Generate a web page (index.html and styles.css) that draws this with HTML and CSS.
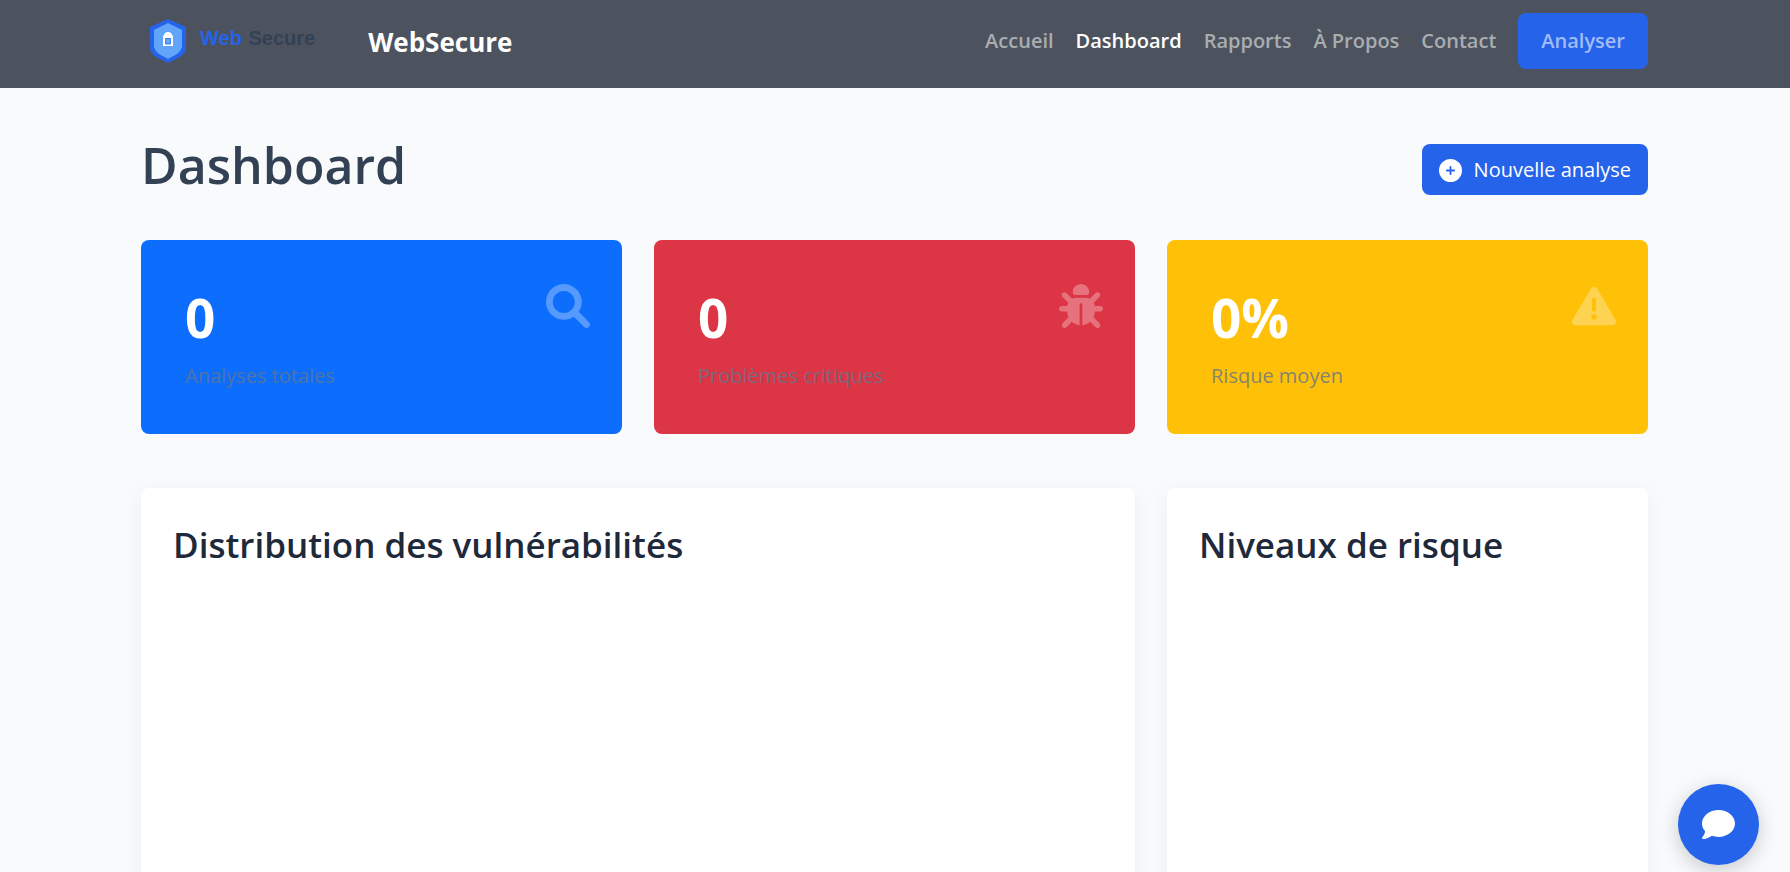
FILE: index.html
```html
<!DOCTYPE html>
<html lang="fr">
<head>
<meta charset="utf-8">
<meta name="viewport" content="width=device-width, initial-scale=1">
<title>Dashboard - WebSecure</title>
<link rel="stylesheet" href="styles.css">
</head>
<body>
<header class="navbar">
  <div class="container navbar-inner">
    <a class="brand" href="#">
      <span class="logo">
        <svg class="logo-shield" viewBox="0 0 36 44" aria-hidden="true">
          <path fill="#2563eb" d="M18 0 36 8V28Q36 34 30 38L18 44 6 38Q0 34 0 28V8Z"/>
          <path fill="#60a5fa" d="M18 4 32 11V28Q31 32 27 35L18 40 9 35Q5 32 4 28V11Z"/>
          <path fill="#fff" d="M14 16Q14.500 13 18 13T22 16L23 17V27H13V17Z"/>
          <path fill="#60a5fa" stroke="#3b82f6" d="M15.500 19.500H20.500V25H15.500Z"/>
        </svg>
        <span class="logo-text"><span class="logo-web">Web</span> <span>Secure</span></span>
      </span>
      <span class="brand-name">WebSecure</span>
    </a>
    <nav class="nav" aria-label="Navigation principale">
      <a class="nav-link" href="#">Accueil</a>
      <a class="nav-link active" href="#" aria-current="page">Dashboard</a>
      <a class="nav-link" href="#">Rapports</a>
      <a class="nav-link" href="#">À Propos</a>
      <a class="nav-link" href="#">Contact</a>
      <a class="nav-link nav-cta" href="#">Analyser</a>
    </nav>
  </div>
</header>

<main class="content">
  <div class="container">
    <div class="page-head">
      <h1 class="page-title">Dashboard</h1>
      <a class="btn-new" href="#">
        <svg class="btn-icon" viewBox="0 0 512 512" aria-hidden="true"><path fill-rule="evenodd" d="M256 512A256 256 0 1 0 256 0a256 256 0 1 0 0 512zM236 338V276H174a20 20 0 0 1 0-40H236V174a20 20 0 0 1 40 0V236H338a20 20 0 0 1 0 40H276V338a20 20 0 0 1-40 0z"/></svg>
        <span>Nouvelle analyse</span>
      </a>
    </div>

    <section class="grid stats" aria-label="Statistiques">
      <article class="stat stat-primary">
        <div>
          <h2 class="stat-value">0</h2>
          <p class="stat-label">Analyses totales</p>
        </div>
        <svg class="stat-icon" viewBox="0 0 512 512" aria-hidden="true"><path d="M500.300 443.700l-119.700-119.700c27.220-40.410 40.650-90.900 33.460-144.700C401.800 87.790 326.800 13.320 235.200 1.723C99.010-15.510-15.510 99.010 1.724 235.200c11.600 91.640 86.080 166.700 177.600 178.900c53.800 7.189 104.300-6.236 144.700-33.460l119.700 119.700c15.620 15.620 40.950 15.620 56.570 0C515.900 484.700 515.900 459.300 500.300 443.700zM79.100 208c0-70.580 57.420-128 128-128s128 57.420 128 128c0 70.580-57.420 128-128 128S79.100 278.600 79.100 208z"/></svg>
      </article>
      <article class="stat stat-danger">
        <div>
          <h2 class="stat-value">0</h2>
          <p class="stat-label">Problèmes critiques</p>
        </div>
        <svg class="stat-icon" viewBox="0 0 512 512" aria-hidden="true"><path d="M256 0c53 0 96 43 96 96v3.600c0 15.700-12.700 28.400-28.400 28.400H188.400c-15.700 0-28.400-12.700-28.400-28.400V96c0-53 43-96 96-96zM41.400 105.400c12.500-12.500 32.800-12.500 45.300 0l64 64c.7 .7 1.300 1.400 1.900 2.100c14.200-7.300 30.400-11.400 47.500-11.400H312c17.100 0 33.200 4.100 47.500 11.400c.6-.7 1.200-1.400 1.900-2.100l64-64c12.500-12.500 32.800-12.500 45.300 0s12.500 32.800 0 45.300l-64 64c-.7 .7-1.400 1.300-2.100 1.900c6.200 12 10.100 25.300 11.100 39.500H480c17.700 0 32 14.300 32 32s-14.300 32-32 32H416c0 24.600-5.500 47.800-15.400 68.600c2.200 1.300 4.200 2.900 6 4.800l64 64c12.500 12.500 12.500 32.800 0 45.300s-32.800 12.500-45.300 0l-63.100-63.100c-24.500 21.800-55.800 36.200-90.300 39.600V240c0-8.800-7.200-16-16-16s-16 7.200-16 16V479.200c-34.500-3.400-65.800-17.800-90.300-39.600L86.600 502.600c-12.500 12.500-32.800 12.500-45.300 0s-12.500-32.800 0-45.300l64-64c1.900-1.900 3.900-3.400 6-4.800C101.500 367.800 96 344.600 96 320H32c-17.700 0-32-14.300-32-32s14.300-32 32-32H96.300c1.100-14.100 5-27.500 11.100-39.500c-.7-.6-1.400-1.200-2.100-1.900l-64-64c-12.500-12.500-12.500-32.800 0-45.300z"/></svg>
      </article>
      <article class="stat stat-warning">
        <div>
          <h2 class="stat-value">0%</h2>
          <p class="stat-label">Risque moyen</p>
        </div>
        <svg class="stat-icon" viewBox="0 0 512 512" aria-hidden="true"><path d="M256 32c14.200 0 27.300 7.500 34.500 19.800l216 368c7.300 12.400 7.300 27.700 .2 40.100S486.300 480 472 480H40c-14.300 0-27.600-7.700-34.700-20.100s-7-27.800 .2-40.100l216-368C228.700 39.500 241.800 32 256 32zm0 128c-13.300 0-24 10.700-24 24V296c0 13.300 10.700 24 24 24s24-10.700 24-24V184c0-13.300-10.700-24-24-24zm32 224a32 32 0 1 0 -64 0 32 32 0 1 0 64 0z"/></svg>
      </article>
    </section>

    <section class="grid charts" aria-label="Graphiques">
      <article class="panel panel-wide"><h2 class="panel-title">Distribution des vulnérabilités</h2></article>
      <article class="panel"><h2 class="panel-title">Niveaux de risque</h2></article>
    </section>
  </div>
</main>

<button class="chat-button" type="button" aria-label="Ouvrir le chat">
  <svg class="chat-icon" viewBox="0 0 512 512" aria-hidden="true"><path d="M512 240c0 114.900-114.600 208-256 208c-37.100 0-72.300-6.400-104.100-17.900c-11.900 8.700-31.300 20.600-54.300 30.600C73.600 471.100 44.700 480 16 480c-6.500 0-12.300-3.900-14.800-9.900c-2.500-6-1.100-12.800 3.400-17.400l.3-.3c.3-.3 .7-.7 1.300-1.400c1.100-1.200 2.800-3.100 4.900-5.700c4.100-5 9.600-12.400 15.200-21.600c10-16.600 19.500-38.400 21.400-62.900C17.700 326.800 0 285.100 0 240C0 125.100 114.600 32 256 32s256 93.100 256 208z"/></svg>
</button>
</body>
</html>
```
FILE: styles.css
```css
:root {
  --primary: #2563eb;
  --page: #f8fafc;
  --bar: #4c535e;
}

* { box-sizing: border-box; }

body {
  display: flex;
  flex-direction: column;
  height: 100vh;
  margin: 0;
  background: var(--page);
  color: #1e293b;
  font-family: "Segoe UI", "Open Sans", "Noto Sans", sans-serif;
  font-size: 20px;
  line-height: 32px;
}

a { color: inherit; text-decoration: none; }
h1, h2, p { margin: 0; }
svg { display: block; fill: currentColor; }

.container {
  width: 100%;
  max-width: 1540px;
  margin: 0 auto;
  padding: 0 17px 0 16px;
}

.navbar { background: var(--bar); color: #fff; }

.navbar-inner {
  display: flex;
  align-items: center;
  justify-content: space-between;
  padding-top: 13px;
  padding-bottom: 19px;
}

.brand { display: flex; align-items: center; gap: 53px; }

.logo {
  display: flex;
  align-items: center;
  gap: 14px;
  padding-left: 9px;
}

.logo-shield { width: 36px; height: 44px; }

.logo-text {
  padding-bottom: 6px;
  color: #334155;
  font: bold 20px/24px "Liberation Sans", Arial, sans-serif;
}

.logo-web { margin-right: 1px; color: var(--primary); }

.brand-name { padding-top: 2px; font-size: 26px; font-weight: 700; }

.nav { display: flex; align-items: center; gap: 22px; }

.nav-link { color: #a9adb1; font-weight: 600; }
.nav-link.active { color: #fff; }

.nav-cta {
  padding: 12px 23px;
  border-radius: 8px;
  background: var(--primary);
  color: #a0bbf7;
}

.content {
  flex: 1;
  min-height: 0;
  padding-top: 48px;
  overflow-y: auto;
  scrollbar-width: none;
}

.page-head {
  display: flex;
  align-items: flex-end;
  justify-content: space-between;
  margin-bottom: 45px;
}

.page-title {
  color: #334155;
  font-size: 50px;
  font-weight: 600;
  line-height: 59px;
}

.btn-new {
  display: flex;
  align-items: center;
  gap: 12px;
  padding: 10px 17px 9px;
  border-radius: 8px;
  background: var(--primary);
  color: #fff;
}

.btn-icon { width: 23px; height: 23px; }

.grid {
  display: grid;
  grid-template-columns: repeat(3, 1fr);
  gap: 32px;
}

.stat {
  display: flex;
  align-items: flex-start;
  justify-content: space-between;
  padding: 44px 32px 42px 44px;
  border-radius: 8px;
  color: #fff;
}

.stat-primary { background: #0d6efd; }
.stat-danger { background: #dc3545; }
.stat-warning { background: #ffc107; }

.stat-value {
  margin-bottom: 8px;
  font-size: 53px;
  font-weight: 700;
  line-height: 68px;
}

.stat-label { color: rgba(100, 116, 139, 0.8); }
.stat-icon { width: 44px; height: 44px; opacity: 0.3; }

.charts { margin-top: 54px; padding-bottom: 54px; }

.panel {
  min-height: 500px;
  padding: 32px;
  border-radius: 8px;
  background: #fff;
  box-shadow: 0 5px 20px rgba(0, 0, 0, 0.05);
}

.panel-wide { grid-column: span 2; }

.panel-title { font-size: 35px; font-weight: 600; line-height: 50px; }

.chat-button {
  position: fixed;
  right: 31px;
  bottom: 7px;
  display: flex;
  align-items: center;
  justify-content: center;
  width: 81px;
  height: 81px;
  padding: 0;
  border: 0;
  border-radius: 50%;
  background: var(--primary);
  color: #fff;
  box-shadow: 0 5px 20px rgba(0, 0, 0, 0.2);
}

.chat-icon { width: 33px; height: 33px; }
```
